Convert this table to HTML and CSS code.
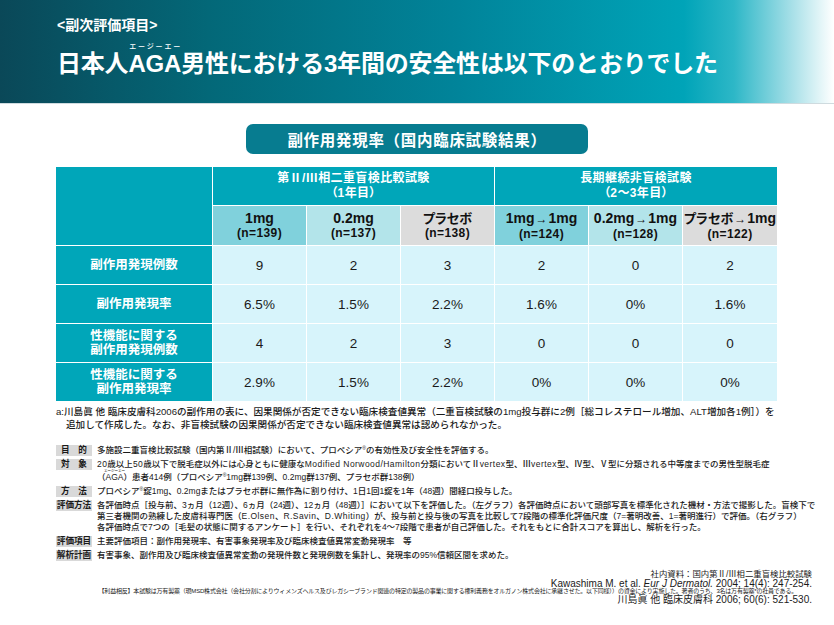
FILE: index.html
```html
<!DOCTYPE html>
<html lang="ja">
<head>
<meta charset="utf-8">
<title>副次評価項目 安全性</title>
<link rel="stylesheet" href="styles.css">
</head>
<body>
<header class="hero">
  <div class="kicker">&lt;副次評価項目&gt;</div>
  <h1 class="title">日本人<ruby>AGA<rt>エージーエー</rt></ruby>男性における3年間の安全性は以下のとおりでした</h1>
</header>
<main class="content">
  <div class="caption-row"><div class="caption">副作用発現率（国内臨床試験結果）</div></div>

  <div class="grid">
    <div class="corner"></div>
    <div class="gh span3"><span>第Ⅱ/Ⅲ相二重盲検比較試験</span><span>（1年目）</span></div>
    <div class="gh span3"><span>長期継続非盲検試験</span><span>（2～3年目）</span></div>

    <div class="sh c1"><span class="dose">1mg</span><span class="n">(n=139)</span></div>
    <div class="sh c2"><span class="dose">0.2mg</span><span class="n">(n=137)</span></div>
    <div class="sh c3"><span class="dose"><span class="kana">プラセボ</span></span><span class="n">(n=138)</span></div>
    <div class="sh c1"><span class="dose">1mg<span class="arr">→</span>1mg</span><span class="n">(n=124)</span></div>
    <div class="sh c2"><span class="dose">0.2mg<span class="arr">→</span>1mg</span><span class="n">(n=128)</span></div>
    <div class="sh c3"><span class="dose"><span class="kana">プラセボ</span><span class="arr">→</span>1mg</span><span class="n">(n=122)</span></div>

    <div class="rh">副作用発現例数</div>
    <div class="td">9</div><div class="td">2</div><div class="td">3</div><div class="td">2</div><div class="td">0</div><div class="td">2</div>

    <div class="rh">副作用発現率</div>
    <div class="td">6.5%</div><div class="td">1.5%</div><div class="td">2.2%</div><div class="td">1.6%</div><div class="td">0%</div><div class="td">1.6%</div>

    <div class="rh"><span>性機能に関する</span><span>副作用発現例数</span></div>
    <div class="td">4</div><div class="td">2</div><div class="td">3</div><div class="td">0</div><div class="td">0</div><div class="td">0</div>

    <div class="rh"><span>性機能に関する</span><span>副作用発現率</span></div>
    <div class="td">2.9%</div><div class="td">1.5%</div><div class="td">2.2%</div><div class="td">0%</div><div class="td">0%</div><div class="td">0%</div>
  </div>

  <p class="note">a:川島眞 他 臨床皮膚科2006の副作用の表に、因果関係が否定できない臨床検査値異常（二重盲検試験の1mg投与群に2例［総コレステロール増加、ALT増加各1例］）を<br>追加して作成した。なお、非盲検試験の因果関係が否定できない臨床検査値異常は認められなかった。</p>

  <div class="info">
    <div class="row"><span class="lbl">目　的</span><p class="txt">多施設二重盲検比較試験（国内第Ⅱ/Ⅲ相試験）において、プロペシア<sup>®</sup>の有効性及び安全性を評価する。</p></div>
    <div class="row"><span class="lbl">対　象</span><p class="txt"><span class="lt">20</span>歳以上<span class="lt">50</span>歳以下で脱毛症以外には心身ともに健康な<span class="lt">Modified Norwood/Hamilton</span>分類においてⅡ<span class="lt">vertex</span>型、Ⅲ<span class="lt">vertex</span>型、Ⅳ型、Ⅴ型に分類される中等度までの男性型脱毛症<br>（<ruby>AGA<rt>エージーエー</rt></ruby>）患者414例（プロペシア<sup>®</sup>1mg群139例、0.2mg群137例、プラセボ群138例）</p></div>
    <div class="row"><span class="lbl">方　法</span><p class="txt">プロペシア<sup>®</sup>錠1mg、0.2mgまたはプラセボ群に無作為に割り付け、1日1回1錠を1年（48週）間経口投与した。</p></div>
    <div class="row"><span class="lbl">評価方法</span><p class="txt">各評価時点［投与前、3ヵ月（12週）、6ヵ月（24週）、12ヵ月（48週）］において以下を評価した。（左グラフ）各評価時点において頭部写真を標準化された機材・方法で撮影した。盲検下で<br>第三者機関の熟練した皮膚科専門医（<span class="lt">E.Olsen</span>、<span class="lt">R.Savin</span>、<span class="lt">D.Whiting</span>）が、投与前と投与後の写真を比較して7段階の標準化評価尺度（7=著明改善、1=著明進行）で評価。（右グラフ）<br>各評価時点で7つの［毛髪の状態に関するアンケート］を行い、それぞれを4～7段階で患者が自己評価した。それをもとに合計スコアを算出し、解析を行った。</p></div>
    <div class="row"><span class="lbl">評価項目</span><p class="txt">主要評価項目：副作用発現率、有害事象発現率及び臨床検査値異常変動発現率　等</p></div>
    <div class="row"><span class="lbl">解析計画</span><p class="txt">有害事象、副作用及び臨床検査値異常変動の発現件数と発現例数を集計し、発現率の95%信頼区間を求めた。</p></div>
  </div>

  <div class="refs">
    <p class="ref-jp">社内資料：国内第Ⅱ/Ⅲ相二重盲検比較試験</p>
    <p class="ref-en">Kawashima M. et al. <i>Eur J Dermatol.</i> 2004; 14(4): 247-254.</p>
    <p class="coi">【利益相反】本試験は万有製薬（現MSD株式会社（会社分割によりウィメンズヘルス及びレガシーブランド関連の特定の製品の事業に関する権利義務をオルガノン株式会社に承継させた。以下同様））の資金により実施した。著者のうち、3名は万有製薬*の社員である。</p>
    <p class="ref-en">川島眞 他 臨床皮膚科 2006; 60(6): 521-530.</p>
  </div>
</main>
</body>
</html>
```

FILE: styles.css
```css
* { box-sizing: border-box; }

html, body {
  margin: 0;
  padding: 0;
}

body {
  width: 834px;
  height: 625px;
  overflow: hidden;
  background: #ffffff;
  color: #1a1a1a;
  font-family: "Liberation Sans", "Noto Sans CJK JP", sans-serif;
}

p { margin: 0; }

/* ---------- hero band ---------- */
.hero {
  height: 104px;
  padding-left: 57px;
  display: flex;
  flex-direction: column;
  color: #ffffff;
  background: linear-gradient(90deg, #0a4858 0%, #036878 25%, #01849a 55%, #00a4b8 82%, #2db7c7 88%, #a8e0e8 95%, #ffffff 100%);
  border-bottom: 1px solid #cfdbdf;
}

.kicker {
  margin-top: 17px;
  font-size: 14px;
  line-height: 16px;
  font-weight: 700;
}

.title {
  margin: 13px 0 0;
  font-size: 24px;
  line-height: 26px;
  font-weight: 700;
  letter-spacing: -0.2px;
}

.title rt {
  font-size: 7px;
  line-height: 8px;
  font-weight: 500;
  letter-spacing: 0;
  position: relative;
  top: -3px;
}

/* ---------- caption ---------- */
.caption-row {
  padding-left: 246px;
  margin-top: 20px;
}

.caption {
  width: 342px;
  height: 30px;
  border-radius: 7px;
  background: #077c90;
  color: #ffffff;
  font-size: 15.5px;
  font-weight: 700;
  letter-spacing: 0.7px;
  display: flex;
  align-items: center;
  justify-content: center;
}

/* ---------- table grid ---------- */
.grid {
  margin: 13px 0 0 56px;
  display: grid;
  grid-template-columns: 156px repeat(5, 93px) 94px;
  grid-template-rows: 38px 39px repeat(4, 38px);
  gap: 1px;
  width: 721px;
}

.corner {
  grid-row: 1 / span 2;
  background: #00a6b9;
}

.gh {
  grid-column: span 3;
  background: #00a6b9;
  color: #ffffff;
  font-weight: 700;
  font-size: 12px;
  line-height: 15px;
  letter-spacing: 0.4px;
  font-feature-settings: "palt";
  display: flex;
  flex-direction: column;
  align-items: center;
  justify-content: center;
}

.sh {
  display: flex;
  flex-direction: column;
  align-items: center;
  justify-content: center;
  font-weight: 700;
  color: #111111;
  white-space: nowrap;
}

.sh.c1 { background: #80d1dc; }
.sh.c2 { background: #b3e4ea; }
.sh.c3 { background: #dcdcdc; }

.dose {
  font-size: 14px;
  line-height: 15px;
  white-space: nowrap;
}

.kana {
  font-size: 13px;
  font-feature-settings: "palt";
}

.arr {
  font-size: 12px;
  margin: 0 1px;
}

.n {
  font-size: 12px;
  line-height: 14px;
  letter-spacing: 0.4px;
}

.rh {
  background: #00a6b9;
  color: #ffffff;
  font-weight: 700;
  font-size: 12.5px;
  line-height: 14px;
  display: flex;
  flex-direction: column;
  align-items: center;
  justify-content: center;
}

.td {
  background: #d7f4fb;
  font-size: 13.5px;
  display: flex;
  align-items: center;
  justify-content: center;
  color: #1a1a1a;
}

/* ---------- note ---------- */
.note {
  margin: 4px 0 0 56px;
  padding-left: 10px;
  text-indent: -10px;
  font-size: 9.6px;
  line-height: 13px;
  font-weight: 500;
  white-space: nowrap;
}

/* ---------- study info ---------- */
.info {
  margin: 14px 0 0 56px;
  display: flex;
  flex-direction: column;
  gap: 3px;
}

.row {
  display: flex;
  align-items: flex-start;
  gap: 5px;
}

.lbl {
  flex: 0 0 36px;
  height: 11px;
  background: #d9d9d9;
  font-size: 8.6px;
  line-height: 11px;
  font-weight: 700;
  text-align: center;
  color: #1a1a1a;
}

.txt {
  font-size: 8.5px;
  line-height: 11px;
  font-weight: 500;
  white-space: nowrap;
}

.lt {
  letter-spacing: 0.45px;
}

.txt sup {
  font-size: 5px;
  vertical-align: 3px;
  line-height: 0;
}

.txt rt {
  font-size: 3.5px;
  line-height: 4px;
}

/* ---------- references ---------- */
.refs {
  margin-top: 9px;
  padding-right: 22px;
  text-align: right;
}

.ref-jp {
  font-size: 8.4px;
  line-height: 9px;
}

.ref-en {
  font-size: 10px;
  line-height: 9px;
}

.coi {
  font-size: 6px;
  line-height: 7px;
  letter-spacing: -0.2px;
  white-space: nowrap;
  padding-right: 15px;
}
```
